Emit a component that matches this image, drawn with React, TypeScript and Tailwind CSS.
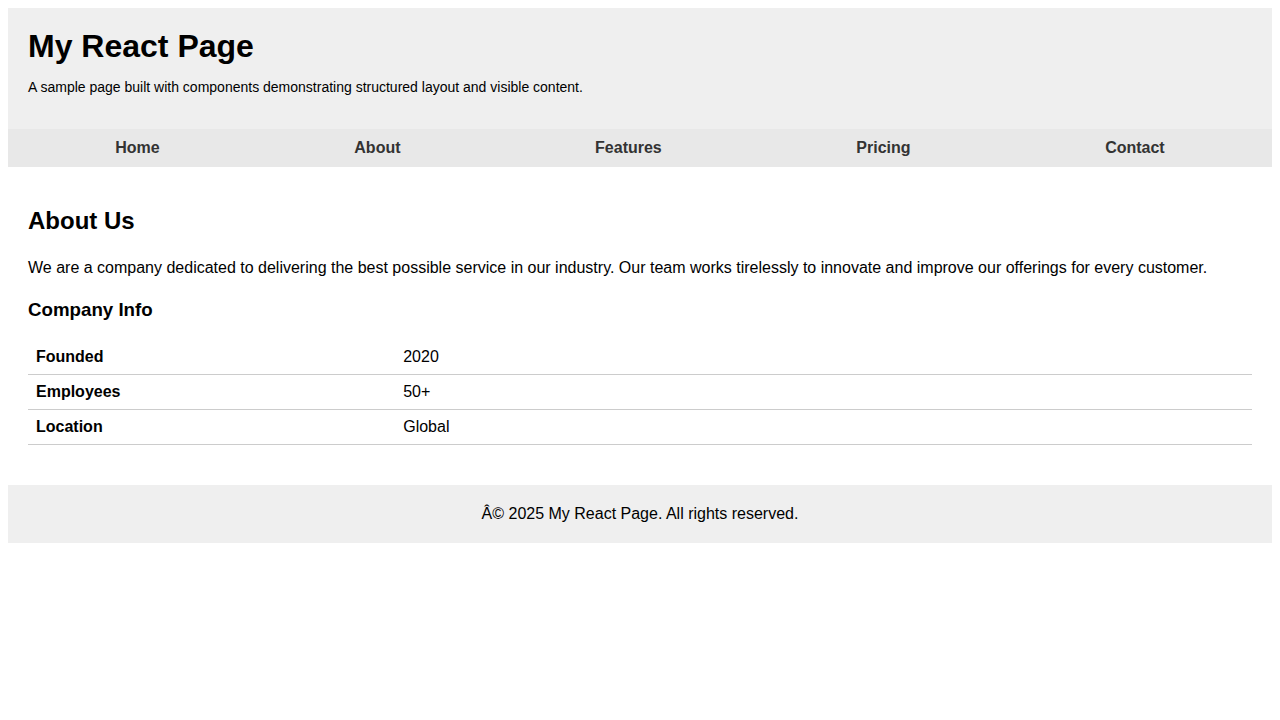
const navItems = ['Home', 'About', 'Features', 'Pricing', 'Contact']

const companyInfo = [
  { label: 'Founded', value: '2020' },
  { label: 'Employees', value: '50+' },
  { label: 'Location', value: 'Global' },
]

function Header() {
  return (
    <header className="bg-[#efefef] p-5">
      <h1 className="m-0 text-[32px] font-bold leading-[normal]">My React Page</h1>
      <p className="my-[14px] text-[14px] leading-[normal]">
        A sample page built with components demonstrating structured layout and visible content.
      </p>
    </header>
  )
}

function Nav() {
  return (
    <nav className="bg-[#e8e8e8] p-[10px]">
      <ul className="m-0 flex list-none justify-around p-0">
        {navItems.map(item => (
          <li key={item} className="leading-[normal]">
            <a href="#" className="text-base font-bold leading-[normal] text-[#333] no-underline">
              {item}
            </a>
          </li>
        ))}
      </ul>
    </nav>
  )
}

function About() {
  return (
    <main className="p-5">
      <section>
        <h2 className="my-[20px] text-[24px] font-bold leading-[normal]">About Us</h2>
        <p className="my-4 text-base leading-[1.6]">
          We are a company dedicated to delivering the best possible service in our industry. Our
          team works tirelessly to innovate and improve our offerings for every customer.
        </p>
        <h3 className="my-[18.72px] text-[18.72px] font-bold leading-[normal]">Company Info</h3>
        <table className="mb-5 w-full border-collapse">
          <tbody>
            {companyInfo.map(row => (
              <tr key={row.label} className="border-b border-[#ccc]">
                <td className="w-[30%] p-2 text-left font-bold leading-[normal]">{row.label}</td>
                <td className="p-2 text-left leading-[normal]">{row.value}</td>
              </tr>
            ))}
          </tbody>
        </table>
      </section>
    </main>
  )
}

function Footer() {
  return (
    <footer className="bg-[#efefef] p-5 text-center text-base leading-[normal]">
      Â© 2025 My React Page. All rights reserved.
    </footer>
  )
}

export default function App() {
  return (
    <div className="min-h-screen bg-white p-2 leading-[normal] text-black [font-family:'Liberation_Sans',Arial,sans-serif]">
      <Header />
      <Nav />
      <About />
      <Footer />
    </div>
  )
}
